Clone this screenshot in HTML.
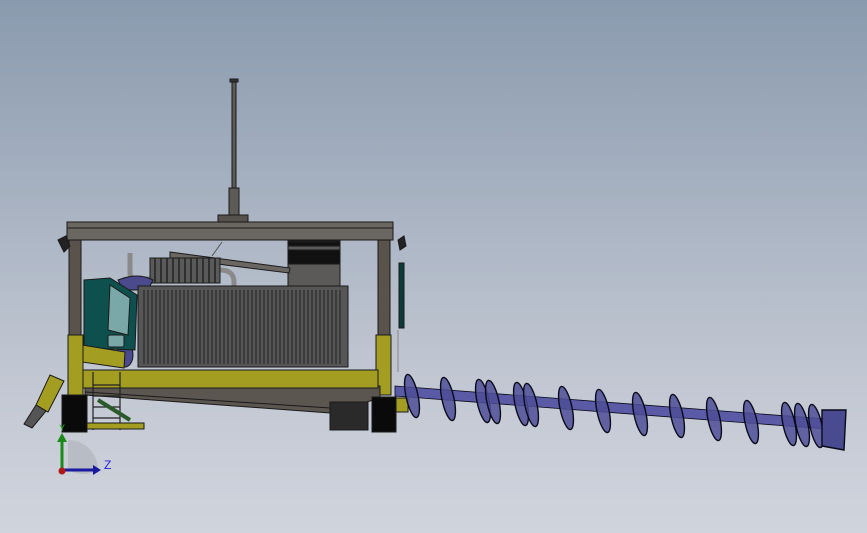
<!DOCTYPE html>
<html><head><meta charset="utf-8"><style>
html,body{margin:0;padding:0;width:867px;height:533px;overflow:hidden}
body{background:linear-gradient(#8a9aae,#c1c7d2 70%,#d0d4dd)}
svg{position:absolute;left:0;top:0}
</style></head><body>
<svg width="867" height="533" viewBox="0 0 867 533" font-family="Liberation Sans, sans-serif">
<g stroke="#1a1a1a" stroke-width="1">
<rect x="232" y="80" width="4" height="108" fill="#5e5a56"/>
<rect x="230" y="79" width="8" height="3" fill="#333"/>
<rect x="229" y="188" width="10" height="28" fill="#5e5a56"/>
<rect x="218" y="215" width="30" height="7" fill="#55524e"/>
<rect x="67" y="222" width="326" height="18" fill="#6a6660"/>
<line x1="67" y1="228" x2="393" y2="228"/>
<rect x="69" y="240" width="12" height="96" fill="#5a534c"/>
<rect x="378" y="240" width="12" height="96" fill="#5a534c"/>
<path d="M58 240l8-4 4 10-6 6z M398 240l6-4 2 10-6 4z" fill="#222"/>
<rect x="288" y="241" width="52" height="46" fill="#5c5a58"/>
<rect x="288" y="242" width="52" height="4" fill="#111"/>
<rect x="288" y="250" width="52" height="14" fill="#111"/>
<path d="M170 252 L290 268 L289 273 L170 258Z" fill="#6a6662"/>
<line x1="212" y1="256" x2="222" y2="242" stroke="#555"/>
<path d="M130 253 v20 q0 6 8 6 h14" fill="none" stroke="#8a8a8a" stroke-width="5"/>
<path d="M220 270 q14 0 14 12 v6" fill="none" stroke="#8a8a8a" stroke-width="5"/>
<rect x="150" y="258" width="70" height="25" fill="#5a5a5a"/>
<g stroke="#222" stroke-width="1.5">
<path d="M155 258v25M161 258v25M167 258v25M173 258v25M179 258v25M185 258v25M191 258v25M197 258v25M203 258v25M209 258v25M215 258v25"/>
</g>
<path d="M118 280 q20 -8 35 0 l-5 10 h-25z" fill="#4a4a8c"/>
<ellipse cx="125" cy="355" rx="8" ry="12" fill="#4a4a8c"/>
<path d="M84 280 L110 278 L137 295 L135 350 L84 348Z" fill="#0e504e"/>
<path d="M110 285 L130 298 L128 335 L108 330Z" fill="#7aa8a8"/>
<rect x="108" y="335" width="16" height="12" fill="#7aa8a8" rx="2"/>
<path d="M82 345 L125 352 L124 368 L82 362Z" fill="#a39e22"/>
<rect x="138" y="286" width="210" height="81" fill="#565656"/>
<g stroke="#2a2a2a" stroke-width="1.2">
<path d="M144 290v74M148 290v74M152 290v74M156 290v74M160 290v74M164 290v74M168 290v74M172 290v74M176 290v74M180 290v74M184 290v74M188 290v74M192 290v74M196 290v74M200 290v74M204 290v74M208 290v74M212 290v74M216 290v74M220 290v74M224 290v74M228 290v74M232 290v74M236 290v74M240 290v74M244 290v74M248 290v74M252 290v74M256 290v74M260 290v74M264 290v74M268 290v74M272 290v74M276 290v74M280 290v74M284 290v74M288 290v74M292 290v74M296 290v74M300 290v74M304 290v74M308 290v74M312 290v74M316 290v74M320 290v74M324 290v74M328 290v74M332 290v74M336 290v74M340 290v74"/>
</g>
<rect x="399" y="263" width="5" height="65" fill="#0d3b3a"/>
<line x1="398" y1="330" x2="398" y2="372" stroke="#888"/>
<rect x="68" y="335" width="15" height="60" fill="#a39e22"/>
<rect x="376" y="335" width="15" height="60" fill="#a39e22"/>
<path d="M85 386 L380 386 L380 398 L330 413 L85 395Z" fill="#5c5650"/>
<path d="M85 392 L330 408" />
<rect x="83" y="370" width="295" height="18" fill="#a39e22"/>
<g fill="none" stroke="#222" stroke-width="1.2"><path d="M93 372v58M120 372v58M93 385h27M93 396h27M93 407h27M93 418h27"/></g>
<path d="M98 400 L130 420" stroke="#2a5a2a" stroke-width="4"/>
<rect x="86" y="423" width="58" height="6" fill="#a39e22"/>
<path d="M50 375 L64 381 L48 412 L36 405Z" fill="#a39e22"/>
<path d="M36 405 L46 411 L32 428 L24 424Z" fill="#555"/>
<rect x="62" y="395" width="25" height="37" fill="#0a0a0a"/>
<rect x="372" y="397" width="24" height="35" fill="#0a0a0a"/>
<rect x="330" y="402" width="38" height="28" fill="#2a2a2a"/>
<rect x="396" y="398" width="12" height="14" fill="#a39e22"/>
</g>
<g stroke="#0a0a1a" stroke-width="1.4">
<path d="M395 386 L840 420 L840 430 L395 396Z" fill="#5a5aa6" stroke-width="0.8"/>
<g fill="#4f4f98" fill-opacity="0.85">
<ellipse cx="412" cy="396" rx="6" ry="22" transform="rotate(-12 412 396)"/>
<ellipse cx="448" cy="399" rx="6" ry="22" transform="rotate(-12 448 399)"/>
<ellipse cx="483" cy="401" rx="6" ry="22" transform="rotate(-12 483 401)"/>
<ellipse cx="493" cy="402" rx="6" ry="22" transform="rotate(-12 493 402)"/>
<ellipse cx="521" cy="404" rx="6" ry="22" transform="rotate(-12 521 404)"/>
<ellipse cx="531" cy="405" rx="6" ry="22" transform="rotate(-12 531 405)"/>
<ellipse cx="566" cy="408" rx="6" ry="22" transform="rotate(-12 566 408)"/>
<ellipse cx="603" cy="411" rx="6" ry="22" transform="rotate(-12 603 411)"/>
<ellipse cx="640" cy="414" rx="6" ry="22" transform="rotate(-12 640 414)"/>
<ellipse cx="677" cy="416" rx="6" ry="22" transform="rotate(-12 677 416)"/>
<ellipse cx="714" cy="419" rx="6" ry="22" transform="rotate(-12 714 419)"/>
<ellipse cx="751" cy="422" rx="6" ry="22" transform="rotate(-12 751 422)"/>
<ellipse cx="789" cy="424" rx="6" ry="22" transform="rotate(-12 789 424)"/>
<ellipse cx="802" cy="425" rx="6" ry="22" transform="rotate(-12 802 425)"/>
<ellipse cx="816" cy="426" rx="6" ry="22" transform="rotate(-12 816 426)"/>
</g>
<path d="M822 410 L846 410 L844 450 L822 446Z" fill="#4a4a90"/>
</g>
<path d="M68 470 A30 30 0 0 0 98 470 L98 470 A30 30 0 0 0 68 440Z" fill="#b8bcc4"/>
<line x1="62" y1="470" x2="62" y2="440" stroke="#1a8a1a" stroke-width="3"/>
<path d="M57 442 L62 433 L67 442Z" fill="#1a8a1a"/>
<line x1="62" y1="470" x2="94" y2="470" stroke="#1a1aa0" stroke-width="3"/>
<path d="M93 465 L101 470 L93 475Z" fill="#1a1aa0"/>
<circle cx="62" cy="471" r="3.5" fill="#b01818"/>
<text x="104" y="469" font-size="12" fill="#2020e0">Z</text>
<text x="59" y="431" font-size="9" fill="#20c020">Y</text>
</svg>
</body></html>
